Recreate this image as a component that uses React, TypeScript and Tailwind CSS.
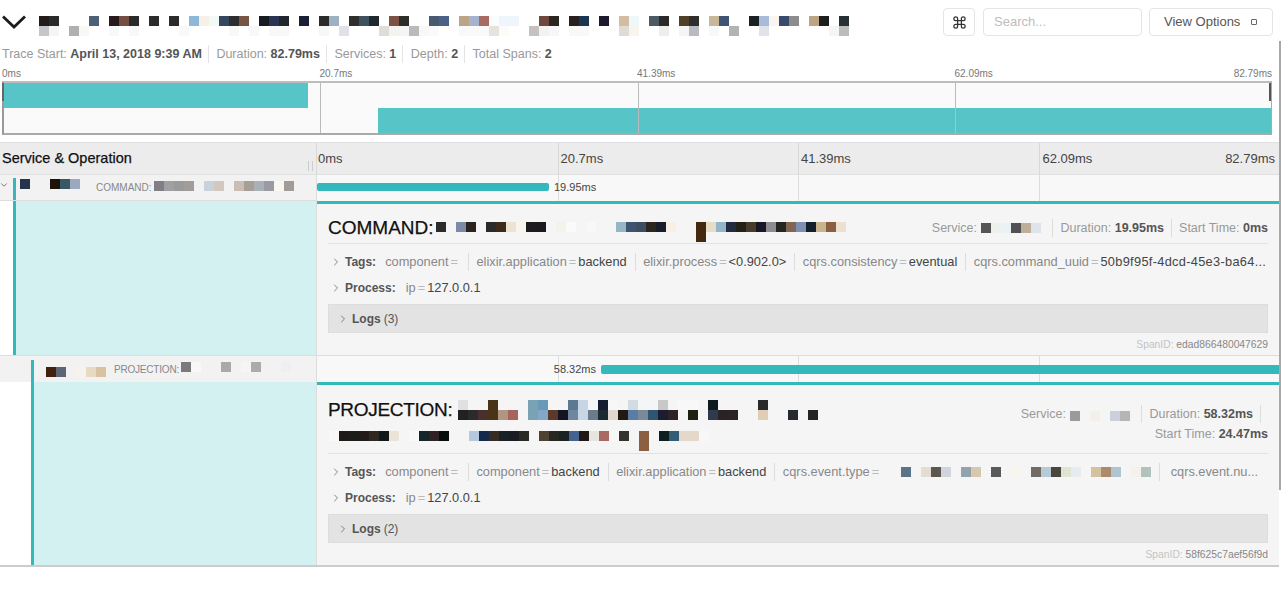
import { ChevronDown, ChevronRight, Command } from "lucide-react";
import type { ReactNode } from "react";

const font = { fontFamily: '"Liberation Sans", Arial, sans-serif' };

// the reference has these names pixelated, so they are mosaics of 10px cells
function Mosaic({ rows }: { rows: string[] }) {
    return <div className="flex flex-col shrink-0">
        {rows.map((row, i) => <div key={i} className="flex">
            {row.split(" ").map((c, j) => <div
                key={j}
                className="w-[10px] h-[10px] shrink-0"
                style={c === "." ? undefined : { backgroundColor: "#" + c }} />)}
        </div>)}
    </div>;
}

const titleRows = [
    "221d1a 2a2a2a . . . 4d6078 . 2a1a1c 754d43 2b2b2b . 2b2d2b . 2b2b2b . 8fb8d8 f6f0e6 f2faf6 35475f 2e2e30 775645 . 171a20 2b3355 20272c . 1a2033 . 2b2b2b 9fb0c3 . 2e2e2e 3e525d 1d292e . 7c5146 2c2f27 . . 475a70 4c6187 . bca584 a5b3cc a86a62 fbfdfd eef5fc eef5fc . . 6e483c 2b2620 . 2a1f1f 1a3650 . 1c1a2c . d2bda3 eef7f9 . 4a5a66 2a2a2a . 4f4028 2e2e2e . c8b89a 3f5374 . . 1a2024 a7bcd8 faf5ee 384a6e 8c8c8c . bba582 1e1e1e . 263033",
    "c4c6cb f5f5f5 . b0b0b3 f8f8f5 . . f8f8f8 . f8f8f8 . . . . f8f9fb . . . . f8f8f8 . f8f8f8 . f8f8f8 f8f8f8 . . . f7f7f7 . dfe3e8 . . . e0dcd7 f4f3f1 f5f5f5 bababa f8f8f8 f8fafc . . f8f9fb f9f9f9 f9f9f9 e6e3de fbfbf8 . . c4c1bf f3f2f0 f7f7f5 . f8f8f8 f8f8f8 . . . e0dbd5 f8f4f0 . . f0eeea . f5f5f5 b9bbc0 . f8f8f8 . b3b3b3 . . e0e3ea . . . . . . f5f5f5 bcbcbc",
];

function Stat({ label, value, last }: { label: string, value: string, last?: boolean }) {
    return <span className={last ? "" : "pr-[6px] mr-[7.5px] border-r border-[#e4e4e4]"}>
        <span className="text-[#999]">{label} </span>
        <span className="font-bold text-[#555]">{value}</span>
    </span>;
}

function Tag({ k, v, children, last }: { k: string, v?: string, children?: ReactNode, last?: boolean }) {
    return <div className={"flex items-center shrink-0 h-[18px] " + (last ? "" : "pr-[8px] mr-[7.5px] border-r border-[#ddd]")}>
        <span className="text-[#888]">{k}</span>
        <span className="text-[#bbb] mx-[2px]">=</span>
        {v && <span className="text-[#444]">{v}</span>}
        {children}
    </div>;
}

function GridLines() {
    return <div className="absolute inset-0 grid grid-cols-4">
        <div />
        <div className="border-l border-[#ddd]" />
        <div className="border-l border-[#ddd]" />
        <div className="border-l border-[#ddd]" />
    </div>;
}

function SpanDetails({ title, tags, logs, spanId }: { title: ReactNode, tags: ReactNode, logs: number, spanId: string }) {
    return <div className="flex-1 min-w-0 flex flex-col bg-[#f5f5f5] border-t-[3px] border-[#33b8bc] px-[11px]">
        {title}
        <div className="flex items-center h-[18px] mt-[9px] text-[12.8px] whitespace-nowrap">
            <ChevronRight size={12} strokeWidth={1.4} className="text-[#555] ml-[2px] mr-[3px] shrink-0" />
            <span className="text-[12px] font-bold text-[#555] mr-[9px]">Tags:</span>
            {tags}
        </div>
        <div className="flex items-center h-[18px] mt-[8px] text-[12.8px] whitespace-nowrap">
            <ChevronRight size={12} strokeWidth={1.4} className="text-[#555] ml-[2px] mr-[3px] shrink-0" />
            <span className="text-[12px] font-bold text-[#555] mr-[10px]">Process:</span>
            <Tag k="ip" v="127.0.0.1" last />
        </div>
        <div className="flex items-center h-[29px] mt-[7px] bg-[#e3e3e3] border border-[#ddd] pl-[8px] text-[12px]">
            <ChevronRight size={12} strokeWidth={1.4} className="text-[#555] shrink-0" />
            <span className="font-bold text-[#555] ml-[3px]">Logs</span>
            <span className="text-[#555] ml-[3px]">({logs})</span>
        </div>
        <div className="flex justify-end items-center h-[22px] pt-[2px] text-[10.3px]">
            <span className="text-[#c4c4c4]">SpanID:&nbsp;</span>
            <span className="text-[#888]">{spanId}</span>
        </div>
    </div>;
}

function MetaItem({ label, value, sep, children }: { label: string, value?: string, sep?: boolean, children?: ReactNode }) {
    return <span className={"flex items-center h-[18px] " + (sep ? "pr-[7px] mr-[7px] border-r border-[#ddd]" : "")}>
        <span className="text-[#999]">{label}&nbsp;</span>
        {value && <span className="font-bold text-[#555]">{value}</span>}
        {children}
    </span>;
}

export default function App() {
    return <div className="relative w-[1281px] h-[603px] bg-white overflow-hidden" style={font}>
        <div className="absolute right-0 top-[41px] w-[2px] h-[449px] bg-[#a8a8a8]" />
        <div className="w-[1279px]">
            <div className="flex items-start h-[42px]">
                <svg width="24" height="14" viewBox="0 0 24 14" className="ml-[2px] mt-[15px] shrink-0">
                    <polyline points="1,1.5 12,12 23,1.5" fill="none" stroke="#1c1c1c" strokeWidth="2.8" />
                </svg>
                <div className="ml-[13px] mt-[16px]"><Mosaic rows={titleRows} /></div>
                <div className="flex-1" />
                <div className="flex items-center mt-[8px] mr-[6px]">
                    <button type="button" className="w-[32px] h-[28px] rounded-[4px] border border-[#e5e5e5] flex items-center justify-center">
                        <Command size={15} strokeWidth={2} className="text-[#333]" />
                    </button>
                    <input
                        placeholder="Search..."
                        className="ml-[8px] w-[159px] h-[28px] rounded-[4px] border border-[#e5e5e5] px-[10px] pb-[2px] text-[13px] placeholder:text-[#bdbdbd]" />
                    <button type="button" className="ml-[7px] w-[124px] h-[28px] rounded-[4px] border border-[#e5e5e5] flex items-center pl-[14px] pb-[1px] text-[13px] text-[#555]">
                        View Options
                        <span className="w-[6px] h-[6px] ml-[11px] border border-[#666] rounded-[1px]" />
                    </button>
                </div>
            </div>

            <div className="h-[24px] flex items-center pl-[2px] text-[12.5px] whitespace-nowrap">
                <Stat label="Trace Start:" value="April 13, 2018 9:39 AM" />
                <Stat label="Duration:" value="82.79ms" />
                <Stat label="Services:" value="1" />
                <Stat label="Depth:" value="2" />
                <Stat label="Total Spans:" value="2" last />
            </div>

            <div className="ml-[2px] w-[1270px] h-[15px] grid grid-cols-4 items-center text-[10px] text-[#777]">
                <span>0ms</span>
                <span>20.7ms</span>
                <span>41.39ms</span>
                <span className="flex justify-between"><span>62.09ms</span><span>82.79ms</span></span>
            </div>

            <div className="relative ml-[2px] w-[1270px] h-[54px] bg-[#fafafa] border-2 border-r border-[#bdbdbd] border-r-[#aaa] border-b-[#aaa] border-l-[#999]">
                <div className="h-[25px] w-[304px] bg-[#57c5c8]" />
                <div className="h-[25px] ml-[374px] bg-[#57c5c8]" />
                <div className="absolute inset-y-0 left-[-1px] right-[-1px] grid grid-cols-4">
                    <div />
                    <div className="border-l border-[#bbb]" />
                    <div className="border-l border-[#bbb]" />
                    <div className="border-l border-[#bbb]" />
                </div>
                <div className="absolute left-[-2px] top-0 w-[2px] h-[18px] bg-[#666]" />
                <div className="absolute right-0 top-0 w-[2px] h-[18px] bg-[#555]" />
            </div>

            <div className="mt-[7px] h-[33px] flex bg-[#ececec] border-t border-b border-[#e0e0e0]">
                <div className="w-[317px] shrink-0 flex items-center pl-[2px] border-r border-[#d8d8d8] relative">
                    <span className="text-[14.5px] text-[#111] [-webkit-text-stroke:0.25px_#111]">Service &amp; Operation</span>
                    <span className="absolute right-[3px] top-[18px] w-[5px] h-[10px] border-x border-[#ccc]" />
                </div>
                <div className="flex-1 grid grid-cols-4 text-[13px] text-[#444]">
                    <div className="flex items-center pl-[1px]">0ms</div>
                    <div className="flex items-center pl-[2px] border-l border-[#d8d8d8]">20.7ms</div>
                    <div className="flex items-center pl-[2px] border-l border-[#d8d8d8]">41.39ms</div>
                    <div className="flex items-center justify-between pl-[3px] pr-[4px] border-l border-[#d8d8d8]"><span>62.09ms</span><span>82.79ms</span></div>
                </div>
            </div>

            {/* span 1 row */}
            <div className="h-[26px] flex">
                <div className="w-[317px] shrink-0 flex bg-[#f2f2f2] border-r border-b border-[#ddd]">
                    <div className="w-[13px] shrink-0 pt-[5px]">
                        <ChevronDown size={10} strokeWidth={1.5} className="text-[#333] -ml-[1px]" />
                    </div>
                    <div className="w-[3px] shrink-0 mt-[3px] bg-[#33b8bc]" />
                    <div className="ml-[4px] mt-[4px]"><Mosaic rows={["26354a . . 1f1208 3a5765 9aa8c0"]} /></div>
                    <span className="ml-[16px] mt-[6px] text-[10px] leading-[14px] text-[#888]">COMMAND:</span>
                    <div className="ml-[2px] mt-[6px]"><Mosaic rows={["827e85 a0a0a3 9a9a9a a09d9a . c9d2da d1c8bf . cabdb3 a69f98 aab0b8 9b9ca3 f8f7f2 a19c97"]} /></div>
                </div>
                <div className="relative flex-1 bg-[#f8f8f8]">
                    <GridLines />
                    <div className="absolute left-0 top-[8px] w-[232px] h-[8px] rounded-[2px] bg-[#33b8bc]" />
                    <span className="absolute left-[237px] top-[6px] text-[11px] leading-[13px] text-[#444]">19.95ms</span>
                </div>
            </div>

            {/* span 1 details */}
            <div className="h-[154px] flex">
                <div className="w-[317px] shrink-0 flex border-r border-[#ddd]">
                    <div className="w-[13px] shrink-0 bg-white" />
                    <div className="w-[3px] shrink-0 bg-[#33b8bc]" />
                    <div className="flex-1 bg-[#d4f1f1]" />
                </div>
                <SpanDetails
                    title={<div className="flex justify-between h-[40px] pt-[13px] border-b border-[#e2e2e2]">
                        <div className="flex">
                            <span className="text-[19px] leading-[22px] text-[#111] [-webkit-text-stroke:0.25px_#111]">COMMAND:</span>
                            <div className="ml-[2px] mt-[5px]">
                                <Mosaic rows={[
                                    "2b2b2b . 7b8ba5 2a2320 . 2a2a2a 3c2a1a ece3d5 f8f5ec 1f1a20 1a1a20 . f5f2ee fafafa . f8f8f8 . . 95b5c8 3f5470 3e4e62 2b2620 1a1e28 f8f0e5 . . 45290f e8dcc5 93b5ca 222b40 222218 4a3c2b 1a1828 8e8c90 25261f 7f6552 7b90b3 142029 c9b48c 8a5f42 eee0d0",
                                    ". . . . . . . . . . . . . . . . . . . . . . . . . . 45290f",
                                ]} />
                            </div>
                        </div>
                        <div className="flex items-start text-[12.5px] whitespace-nowrap pt-[2px]">
                            <MetaItem label="Service:" sep>
                                <div className="ml-[1px] mr-[4px]"><Mosaic rows={["555555 eef0ec eaf2f4 505055 bfae98 dfe4ec"]} /></div>
                            </MetaItem>
                            <MetaItem label="Duration:" value="19.95ms" sep />
                            <MetaItem label="Start Time:" value="0ms" />
                        </div>
                    </div>}
                    tags={<>
                        <Tag k="component" />
                        <Tag k="elixir.application" v="backend" />
                        <Tag k="elixir.process" v="<0.902.0>" />
                        <Tag k="cqrs.consistency" v="eventual" />
                        <Tag k="cqrs.command_uuid" last>
                            <span className="text-[#444] tracking-[0.3px]">50b9f95f-4dcd-45e3-ba64...</span>
                        </Tag>
                    </>}
                    logs={3}
                    spanId="edad866480047629" />
            </div>

            {/* span 2 row */}
            <div className="h-[27px] flex border-t border-[#ddd]">
                <div className="w-[317px] shrink-0 flex bg-[#f2f2f2] border-r border-[#ddd]">
                    <div className="w-[31px] shrink-0" />
                    <div className="w-[3px] shrink-0 mt-[4px] bg-[#33b8bc]" />
                    <div className="ml-[12px] mt-[11px]"><Mosaic rows={["40220f 5c6674 . f6f3ee e8d9c3 d8c2a0"]} /></div>
                    <span className="ml-[8px] mt-[7px] w-[67px] text-[10px] leading-[14px] tracking-[-0.2px] text-[#888]">PROJECTION:</span>
                    <div className="mt-[6px]"><Mosaic rows={["7a7a7a f8f8f8 . . a9a9a9 . f5f5f5 ababab . . eeeff5"]} /></div>
                </div>
                <div className="relative flex-1 bg-[#f8f8f8]">
                    <GridLines />
                    <span className="absolute right-[683px] top-[7px] text-[11px] leading-[13px] text-[#444]">58.32ms</span>
                    <div className="absolute left-[284px] right-0 top-[9px] h-[9px] rounded-l-[2px] bg-[#33b8bc]" />
                </div>
            </div>

            {/* span 2 details */}
            <div className="h-[185px] flex border-b-2 border-[#ccc]">
                <div className="w-[317px] shrink-0 flex border-r border-[#ddd]">
                    <div className="w-[31px] shrink-0 bg-white" />
                    <div className="w-[3px] shrink-0 bg-[#33b8bc]" />
                    <div className="flex-1 bg-[#d4f1f1]" />
                </div>
                <SpanDetails
                    title={<div className="flex justify-between h-[69px] pt-[15px] border-b border-[#e2e2e2]">
                        <div className="flex flex-col">
                            <div className="flex">
                                <span className="text-[19px] leading-[22px] tracking-[-0.3px] text-[#111] [-webkit-text-stroke:0.25px_#111] -mt-[1px]">PROJECTION:</span>
                                <div className="ml-[6px]">
                                    <Mosaic rows={[
                                        "e0e0e0 f5f5f5 . 4a3416 . . . 7aa2b5 6a99b5 . f5f5f5 5b7a90 c8d5e4 . 151d30 f7f7f7 . d2dae2 . . c8c8c8 . f8f8f8 f8f8f8 . 0f1a1e f5f5f5 f5f5f5 . . 2a2a2a",
                                        "212121 2b2b2b 4a302a 4a3416 b09585 a7645c . 7aa2b5 83a7c9 5a3a2a 141420 6f86a0 c8d5e4 6a7c8c 1a2a30 e3d8cf 1f1a14 5a7ca5 7a8a9a 2f5670 1d1d30 2d2228 . 1f1f12 . 2e3a4e 2b2226 2a2422 . . e0cdb5 . . 262a2e . 222428",
                                    ]} />
                                </div>
                            </div>
                            <div className="mt-[10px] ml-[1px]">
                                <Mosaic rows={[
                                    "f8f8f8 1e1a1a 1c1c1a 221a18 2e2820 10181a ebe3d8 . f8f8f8 14262a 2e2226 070c0c . . b5c8de 15294a 352c25 182224 1a1c22 282a24 . 4e4232 282622 1a2222 456390 201814 e8e4df a86a62 f8f8f8 33332f . 8a5f42 . 0f1e20 335c75 e3d8ca e3d8ca f8f8f8",
                                    ". . . . . . . . . . . . . . . . . . . . . . . . . . . . . . . 8a5f42",
                                ]} />
                            </div>
                        </div>
                        <div className="flex flex-col items-end text-[12.5px] whitespace-nowrap pt-[5px]">
                            <div className="flex">
                                <MetaItem label="Service:" sep>
                                    <div className="ml-[1px] mt-[4px] mr-[4px]"><Mosaic rows={["9a9a9a . f3f0ea . ccd0dc b5b5b5"]} /></div>
                                </MetaItem>
                                <MetaItem label="Duration:" value="58.32ms" sep />
                            </div>
                            <div className="mt-[2px]"><MetaItem label="Start Time:" value="24.47ms" /></div>
                        </div>
                    </div>}
                    tags={<>
                        <Tag k="component" />
                        <Tag k="component" v="backend" />
                        <Tag k="elixir.application" v="backend" />
                        <Tag k="cqrs.event.type">
                            <div className="ml-[20px]"><Mosaic rows={["5c7488 . e5dcd3 5e574f d0d4dc . 92a3ad d6c8ae . 5a5a5a . f8f5ee . 726a64 b7cad6 4c4640 dfe3d2 e6ebef . d4c2a0 ab8b69 b0c4d2 . f5f1ec b2c2bc"]} /></div>
                        </Tag>
                        <span className="ml-[3px] text-[#888]">cqrs.event.nu...</span>
                    </>}
                    logs={2}
                    spanId="58f625c7aef56f9d" />
            </div>
        </div>
    </div>;
}
